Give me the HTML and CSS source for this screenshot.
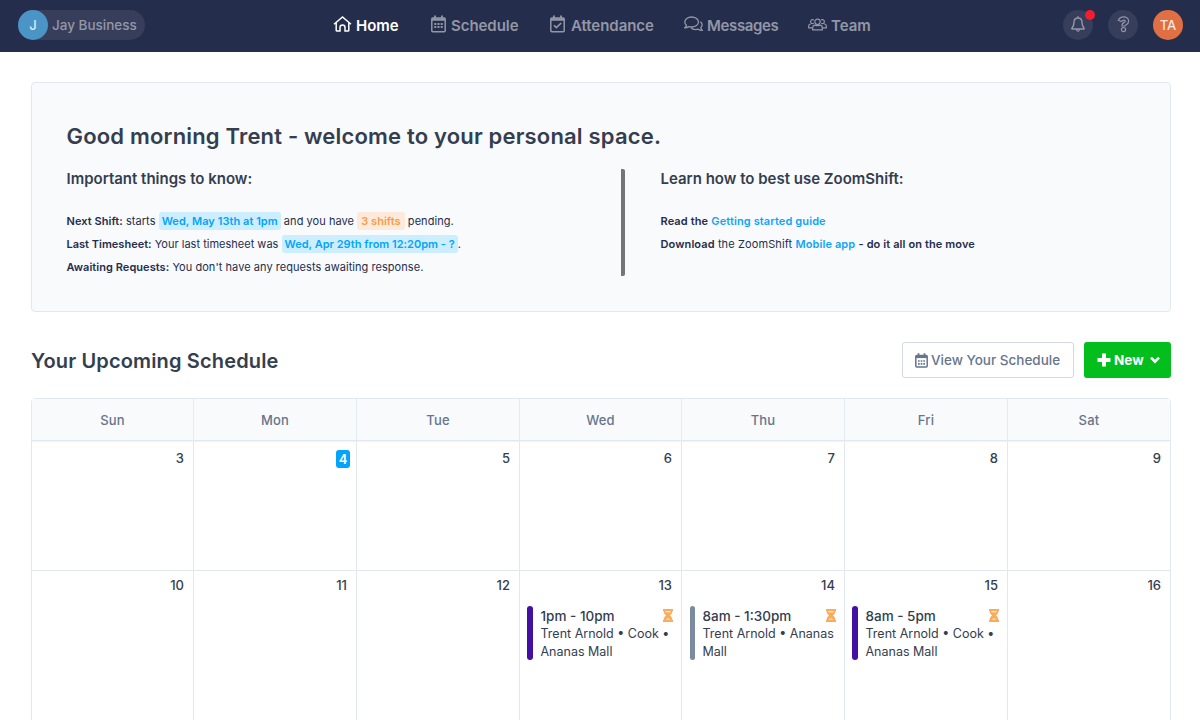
FILE: index.html
```
<!DOCTYPE html>
<html lang="en">
<head>
  <meta charset="UTF-8">
  <meta name="viewport" content="width=device-width, initial-scale=1.0">
  <title>Home - ZoomShift</title>
  <link rel="stylesheet" href="styles.css">
</head>

<body>

<header class="topbar">
  <div class="business">
    <span class="business-avatar">J</span>
    <span class="business-name">Jay Business</span>
  </div>

  <nav class="nav">
    <a class="nav-item active">
      <svg class="icon" width="19" height="16" viewBox="0 0 19 16"><path d="M1 8.2 9.5 1 18 8.2M3.2 7v7.2q0 .8.8.8h3v-3.500a2.500 2.500 0 0 1 5 0V15h3q.8 0 .8-.8V7"/></svg>
      <span>Home</span>
    </a>
    <a class="nav-item schedule">
      <svg class="icon" width="15" height="18" viewBox="0 0 15 18"><rect x=".8" y="3" width="13.400" height="13.700" rx="1"/><path d="M1 4.500h13" stroke-width="2.500"/><path d="M4 .5v3M11 .5v3" stroke-width="1.800"/><path d="M3.300 9h8.400M3.300 12h8.400" stroke-width="2" stroke-dasharray="2 1.200"/></svg>
      <span>Schedule</span>
    </a>
    <a class="nav-item attendance">
      <svg class="icon" width="15" height="18" viewBox="0 0 15 18"><rect x=".8" y="3" width="13.400" height="13.700" rx="1"/><path d="M1 4.500h13" stroke-width="2.500"/><path d="M4 .5v3M11 .5v3" stroke-width="1.800"/><path d="m4 10.300 2.400 2.300L11.200 8" stroke-width="1.700"/></svg>
      <span>Attendance</span>
    </a>
    <a class="nav-item messages">
      <svg class="icon" width="19" height="16" viewBox="0 0 19 16"><path d="M7.500 1C3.800 1 .8 3.200.8 6c0 1.300.6 2.400 1.600 3.300-.2 1-.8 1.700-1.600 2.500 1.500.1 2.800-.4 3.900-1.200.9.300 1.800.4 2.800.4 4 0 7-2.200 7-5s-3-5-7-5zM16.400 5.800c1.100.8 1.700 1.800 1.700 3 0 1.100-.5 2.100-1.300 2.900.1 1.100.7 1.900 1.500 2.700-1.500.1-2.900-.3-4-1.200-3 .8-6 .1-7.300-1.600" stroke-width="1.300"/></svg>
      <span>Messages</span>
    </a>
    <a class="nav-item">
      <svg class="icon" width="19" height="13" viewBox="0 0 19 13"><g stroke-width="1.200"><circle cx="9.500" cy="3.800" r="2.700"/><path d="M4.700 11.800V10c0-1.800 1-2.900 2.500-2.900 1.500.8 3.100.8 4.600 0 1.500 0 2.500 1.100 2.500 2.900v1.800z"/><path d="M5.700 5.300a2 2 0 1 1 .2-3.200M13.300 5.300a2 2 0 1 0-.2-3.200M4.700 9.800h-4V8c0-1.300.7-2 1.900-2.200M14.300 9.800h4V8c0-1.300-.7-2-1.900-2.200"/></g></svg>
      <span>Team</span>
    </a>
  </nav>

  <div class="tools">
    <div class="tool">
      <svg class="icon" width="14" height="16" viewBox="0 0 14 16"><path d="M7 .3v1.500M7 2C4.500 2 3 3.800 3 6.200c0 3.500-1 4.600-2.100 6-.2.500 0 .8.600.8h11c.6 0 .8-.3.600-.8C12 10.800 11 9.700 11 6.200 11 3.800 9.500 2 7 2z" stroke-width="1.400"/><path d="M5.400 13.700h3.200a1.600 1.600 0 0 1-3.200 0z" stroke-width="1"/></svg>
      <span class="dot"></span>
    </div>
    <div class="tool">
      <svg class="icon" width="13" height="17" viewBox="0 0 13 17"><path d="M1.300 4.200C2.300 2 4.100.9 6.500.9c2.800 0 5.100 1.700 5.100 4.300 0 3.500-3.500 3.300-3.500 4.600v.2H5v-.6c0-3 3.200-2.900 3.200-4.100 0-1.500-2.400-1.600-3.600.3z" stroke-width="1.200"/><circle cx="6.500" cy="13.600" r="2.100" stroke-width="1.200"/></svg>
    </div>
    <div class="tool user">TA</div>
  </div>
</header>

<main class="page">

  <section class="welcome">
    <h1>Good morning Trent - welcome to your personal space.</h1>
    <div class="welcome-columns">
      <div class="welcome-left">
        <h3>Important things to know:</h3>
        <p><b>Next Shift:</b> starts <span class="tag blue">Wed, May 13th at 1pm</span> and you have <span class="tag orange">3 shifts</span> pending.</p>
        <p class="last-timesheet"><b>Last Timesheet:</b> Your last timesheet was <span class="tag blue">Wed, Apr 29th from 12:20pm - ?</span>.</p>
        <p><b>Awaiting Requests:</b> You don't have any requests awaiting response.</p>
      </div>
      <div class="welcome-right">
        <h3>Learn how to best use ZoomShift:</h3>
        <p><b>Read the</b> <a>Getting started guide</a></p>
        <p><b>Download</b> the ZoomShift <a>Mobile app</a> <b>- do it all on the move</b></p>
      </div>
    </div>
  </section>

  <div class="schedule-bar">
    <h2>Your Upcoming Schedule</h2>
    <div class="buttons">
      <a class="btn btn-view">
        <svg class="icon" width="13" height="15" viewBox="0 0 13 15"><rect x=".8" y="2.600" width="11.400" height="11.400" rx="1"/><path d="M1 3.800h11" stroke-width="2.600"/><path d="M3.500.3v3M9.500.3v3" stroke-width="1.800"/><path d="M3 8h7M3 10.800h7" stroke-width="1.700" stroke-dasharray="1.700 .95"/></svg>
        <span>View Your Schedule</span>
      </a>
      <a class="btn btn-new">
        <svg class="icon" width="14" height="14" viewBox="0 0 14 14"><path d="M7 .5v13M.5 7h13" stroke-width="4"/></svg>
        <span>New</span>
        <svg class="icon chevron" width="10" height="8" viewBox="0 0 10 8"><path d="m1 1.700 4 4 4-4" stroke-width="2.600"/></svg>
      </a>
    </div>
  </div>

  <div class="calendar">
    <div class="weekday">Sun</div>
    <div class="weekday">Mon</div>
    <div class="weekday">Tue</div>
    <div class="weekday">Wed</div>
    <div class="weekday">Thu</div>
    <div class="weekday">Fri</div>
    <div class="weekday">Sat</div>

    <div class="day first"><span class="date">3</span></div>
    <div class="day first"><span class="date today">4</span></div>
    <div class="day first"><span class="date">5</span></div>
    <div class="day first"><span class="date">6</span></div>
    <div class="day first"><span class="date">7</span></div>
    <div class="day first"><span class="date">8</span></div>
    <div class="day first"><span class="date">9</span></div>

    <div class="day"><span class="date">10</span></div>
    <div class="day"><span class="date">11</span></div>
    <div class="day"><span class="date">12</span></div>
    <div class="day">
      <span class="date">13</span>
      <div class="shift purple">
        <div class="shift-time"><span>1pm - 10pm</span>
          <svg class="hourglass" width="10" height="13" viewBox="0 0 10 13"><path d="M0 0h10v2.200H9.300c0 1.900-.9 3.300-2.500 4.300 1.600 1 2.500 2.400 2.500 4.300h.7V13H0v-2.200h.7c0-1.900.9-3.300 2.500-4.300C1.600 5.500.7 4.100.7 2.200H0z"/><path class="sand" d="M2.500 2.200h5v1h-5zM2.800 10.500q2.200-2.200 4.400 0z"/></svg>
        </div>
        <div class="shift-info">Trent Arnold • Cook •<br>Ananas Mall</div>
      </div>
    </div>
    <div class="day">
      <span class="date">14</span>
      <div class="shift gray">
        <div class="shift-time"><span>8am - 1:30pm</span>
          <svg class="hourglass" width="10" height="13" viewBox="0 0 10 13"><path d="M0 0h10v2.200H9.300c0 1.900-.9 3.300-2.500 4.300 1.600 1 2.500 2.400 2.500 4.300h.7V13H0v-2.200h.7c0-1.900.9-3.300 2.500-4.300C1.600 5.500.7 4.100.7 2.200H0z"/><path class="sand" d="M2.500 2.200h5v1h-5zM2.800 10.500q2.200-2.200 4.400 0z"/></svg>
        </div>
        <div class="shift-info">Trent Arnold • Ananas<br>Mall</div>
      </div>
    </div>
    <div class="day">
      <span class="date">15</span>
      <div class="shift purple">
        <div class="shift-time"><span>8am - 5pm</span>
          <svg class="hourglass" width="10" height="13" viewBox="0 0 10 13"><path d="M0 0h10v2.200H9.300c0 1.900-.9 3.300-2.500 4.300 1.600 1 2.500 2.400 2.500 4.300h.7V13H0v-2.200h.7c0-1.900.9-3.300 2.500-4.300C1.600 5.500.7 4.100.7 2.200H0z"/><path class="sand" d="M2.500 2.200h5v1h-5zM2.800 10.500q2.200-2.200 4.400 0z"/></svg>
        </div>
        <div class="shift-info">Trent Arnold • Cook •<br>Ananas Mall</div>
      </div>
    </div>
    <div class="day"><span class="date">16</span></div>
  </div>

</main>

</body>
</html>
```
FILE: styles.css
```
* {
  box-sizing: border-box;
}
body {
  margin: 0;
  height: 720px;
  overflow: hidden;
  background: #fff;
  color: #343e4e;
  font-family: Inter, "Liberation Sans", sans-serif;
}
h1, h2, h3, p {
  margin: 0;
}
.icon {
  flex: none;
  fill: none;
  stroke: currentColor;
  stroke-width: 1.5;
}

/* top bar */
.topbar {
  display: grid;
  grid-template-columns: 315px 1fr auto;
  height: 52px;
  padding: 10px 17px 12px 18px;
  background: #252d4c;
  color: #9297a6;
}
.business {
  display: flex;
  align-items: center;
  justify-self: start;
  width: 127px;
  height: 30px;
  border-radius: 15px;
  background: #373e5c;
}
.business-avatar {
  width: 30px;
  margin-right: 4px;
  border-radius: 50%;
  background: #4b94c6;
  color: #dcebf5;
  font-size: 13px;
  font-weight: 500;
  line-height: 30px;
  text-align: center;
}
.business-name {
  font-size: 13.5px;
  font-weight: 500;
  white-space: nowrap;
}
.nav {
  display: grid;
  grid-template-columns: 98px 119px 134px 124px 70px;
  height: 30px;
}
.nav-item {
  display: flex;
  align-items: center;
  gap: 4px;
  font-size: 15px;
  font-weight: 600;
  letter-spacing: -0.05px;
  white-space: nowrap;
}
.nav-item .icon {
  margin-top: -2px;
}
.nav-item.active {
  color: #fff;
}
.nav-item.schedule {
  gap: 5px;
}
.nav-item.attendance {
  gap: 6px;
}
.nav-item.messages {
  letter-spacing: -0.35px;
}
.tools {
  display: flex;
  gap: 15px;
}
.tool {
  position: relative;
  display: flex;
  align-items: center;
  justify-content: center;
  width: 30px;
  height: 30px;
  border-radius: 50%;
  background: #373e5c;
}
.tool .icon {
  margin-top: -2px;
}
.dot {
  position: absolute;
  top: 0;
  right: -2px;
  width: 10px;
  height: 10px;
  border-radius: 50%;
  background: #f21d2f;
}
.tool.user {
  background: #e07043;
  color: #f9e7df;
  font-size: 13px;
  font-weight: 500;
}

.page {
  padding: 30px 29px 0 31px;
}

/* welcome panel */
.welcome {
  height: 230px;
  padding: 38px 35px 0 34.5px;
  border: 1px solid #e2e8f0;
  border-radius: 4px;
  background: #f9fafc;
}
.welcome h1 {
  font-size: 22px;
  font-weight: 600;
  letter-spacing: 0.18px;
  line-height: 30px;
  white-space: nowrap;
}
.welcome-columns {
  display: flex;
  height: 107px;
  margin-top: 18px;
}
.welcome-left {
  width: 558.5px;
  border-right: 4px solid #737577;
  border-radius: 2px;
}
.welcome-right {
  padding-left: 35.5px;
}
.welcome h3 {
  margin-bottom: 21px;
  font-size: 15px;
  font-weight: 600;
  line-height: 20px;
  white-space: nowrap;
}
.welcome p {
  color: #252d4c;
  font-size: 11px;
  letter-spacing: 0.05px;
  line-height: 23px;
  white-space: nowrap;
}
.welcome p.last-timesheet {
  letter-spacing: 0.01px;
}
.welcome-right p {
  letter-spacing: 0.11px;
}
.welcome b {
  font-weight: 600;
}
.welcome a {
  color: #0ea5fb;
  font-weight: 600;
}
.tag {
  padding: 2px 3px;
  border-radius: 3px;
  font-weight: 600;
}
.tag.blue {
  background: #cceeff;
  color: #03a4fb;
}
.tag.orange {
  padding: 2px 4px;
  background: #feeada;
  color: #f99b4a;
}

/* schedule title and buttons */
.schedule-bar {
  display: flex;
  align-items: center;
  justify-content: space-between;
  height: 36px;
  margin: 30px 0 20px;
}
.schedule-bar h2 {
  padding-top: 2px;
  font-size: 20px;
  font-weight: 600;
  letter-spacing: 0.15px;
}
.buttons {
  display: flex;
  gap: 10px;
}
.btn {
  display: flex;
  align-items: center;
  height: 36px;
  border-radius: 3px;
  font-size: 13.5px;
  font-weight: 500;
  white-space: nowrap;
}
.btn-view {
  width: 172px;
  padding-left: 12px;
  gap: 3px;
  border: 1px solid #d3dae6;
  color: #66758c;
}
.btn-new {
  width: 87px;
  padding-left: 13px;
  gap: 3px;
  background: #03be1c;
  color: #fff;
  font-weight: 700;
}
.chevron {
  margin-left: 3px;
}

/* calendar */
.calendar {
  display: grid;
  grid-template-columns: 162px 163px 163px 162px 163px 163px 162px;
  grid-template-rows: 42px 130px 170px;
  border: 1px solid #e2e8f0;
  border-radius: 4px;
}
.weekday {
  background: #f9fafc;
  border-right: 1px solid #e2e8f0;
  border-bottom: 1px solid #e2e8f0;
  box-shadow: 0 1px 1px #f1f4f8;
  color: #66758c;
  font-size: 13px;
  font-weight: 500;
  letter-spacing: 0.2px;
  line-height: 42px;
  text-align: center;
}
.day {
  display: flex;
  flex-direction: column;
  padding: 5px 9px 0 7px;
  border-right: 1px solid #e2e8f0;
  border-bottom: 1px solid #e2e8f0;
}
.day.first {
  padding-top: 8px;
}
.weekday:nth-child(7n),
.day:nth-child(7n) {
  border-right: 0;
}
.date {
  align-self: flex-end;
  font-size: 13px;
  font-weight: 500;
  line-height: 18px;
}
.date.today {
  width: 14px;
  margin-top: 1px;
  margin-right: -3px;
  border-radius: 3px;
  background: #03a4fb;
  color: #fff;
  font-weight: 600;
  text-align: center;
}
.shift {
  position: relative;
  height: 54px;
  margin-top: 12px;
  margin-right: -1px;
  padding-left: 13.5px;
  white-space: nowrap;
}
.shift::before {
  content: "";
  position: absolute;
  top: 0;
  bottom: 0;
  left: 0;
  width: 6px;
  border-radius: 3px;
}
.shift.purple::before {
  background: #4310a3;
}
.shift.gray::before {
  left: 1px;
  width: 5px;
  background: #7a8ba0;
}
.shift-time {
  display: flex;
  justify-content: space-between;
  font-size: 13.5px;
  font-weight: 500;
  line-height: 20px;
}
.shift-info {
  margin-top: -1px;
  font-size: 12.5px;
  line-height: 18px;
}
.hourglass {
  margin-top: 3px;
  fill: #f9ac5b;
}
.sand {
  fill: #fff;
}
```
